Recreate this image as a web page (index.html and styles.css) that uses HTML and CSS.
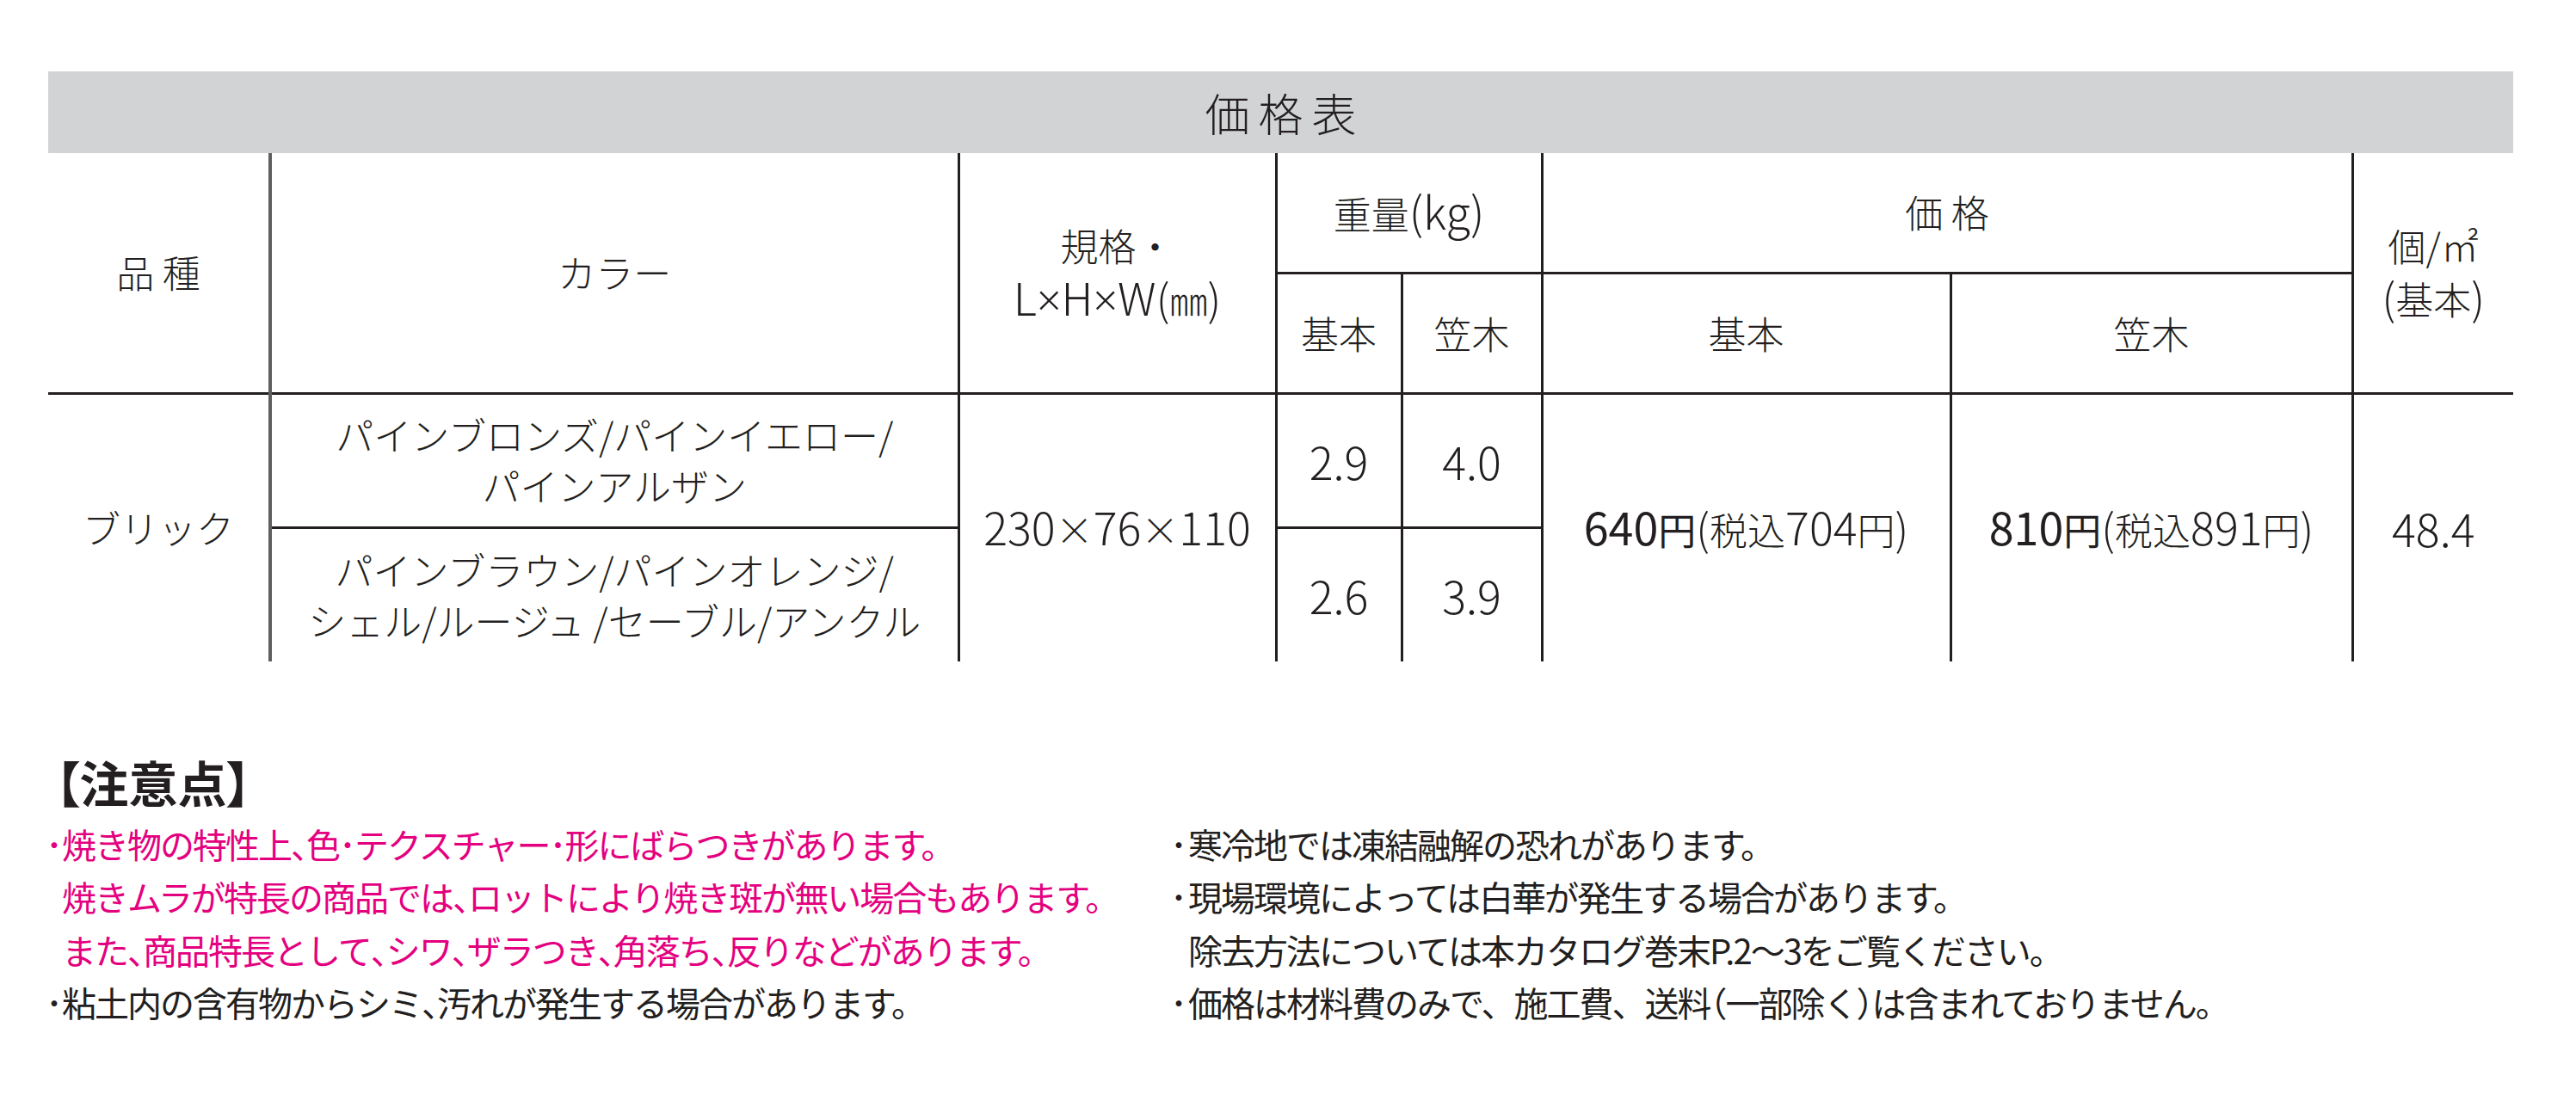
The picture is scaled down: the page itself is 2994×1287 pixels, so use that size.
FILE: index.html
```html
<!DOCTYPE html>
<html lang="ja">
<head>
<meta charset="utf-8">
<title>価格表</title>
<link rel="stylesheet" href="styles.css">
</head>
<body>
<main class="page">
  <table class="price">
    <colgroup>
      <col class="c1"><col class="c2"><col class="c3"><col class="c4"><col class="c5"><col class="c6"><col class="c7"><col class="c8">
    </colgroup>
    <thead>
      <tr class="r-title"><th colspan="8" class="title">価格表</th></tr>
      <tr class="r-h1">
        <th rowspan="2" class="first">品 種</th>
        <th rowspan="2" class="gl">カラー</th>
        <th rowspan="2">規格・<br><span class="num">L<span class="xn">×</span>H<span class="xn">×</span>W</span><span class="par">(</span>㎜<span class="par">)</span></th>
        <th colspan="2" class="hb">重量<span class="num">(kg)</span></th>
        <th colspan="2" class="hb">価 格</th>
        <th rowspan="2">個/㎡<br><span class="par">(</span>基本<span class="par">)</span></th>
      </tr>
      <tr class="r-h2">
        <th>基本</th><th>笠木</th><th>基本</th><th>笠木</th>
      </tr>
    </thead>
    <tbody>
      <tr class="r-b1">
        <td rowspan="2" class="first">ブリック</td>
        <td class="gl rb">パインブロンズ/パインイエロー/<br>パインアルザン</td>
        <td rowspan="2"><span class="num">230<span class="xw">×</span>76<span class="xw">×</span>110</span></td>
        <td class="rb num">2.9</td>
        <td class="rb num">4.0</td>
        <td rowspan="2"><span class="num strong">640</span><span class="strong">円</span><span class="par">(</span>税込<span class="num">704</span>円<span class="par">)</span></td>
        <td rowspan="2"><span class="num strong">810</span><span class="strong">円</span><span class="par">(</span>税込<span class="num">891</span>円<span class="par">)</span></td>
        <td rowspan="2" class="num">48.4</td>
      </tr>
      <tr class="r-b2">
        <td class="gl">パインブラウン/パインオレンジ/<br>シェル/ルージュ /セーブル/アンクル</td>
        <td class="num">2.6</td>
        <td class="num">3.9</td>
      </tr>
    </tbody>
  </table>

  <section class="notes">
    <h2 class="notes-title">【注意点】</h2>
    <div class="notes-cols">
      <ul class="col col-left">
        <li class="pink"><span class="dot">･</span><span class="txt">焼き物の特性上<span class="tk">、</span>色･テクスチャー･形にばらつきがあります。<br>焼きムラが特長の商品では<span class="tk">、</span>ロットにより焼き斑が無い場合もあります。<br>また<span class="tk">、</span>商品特長として<span class="tk">、</span>シワ<span class="tk">、</span>ザラつき<span class="tk">、</span>角落ち<span class="tk">、</span>反りなどがあります。</span></li>
        <li><span class="dot">･</span><span class="txt">粘土内の含有物からシミ<span class="tk">、</span>汚れが発生する場合があります。</span></li>
      </ul>
      <ul class="col col-right">
        <li><span class="dot">･</span><span class="txt">寒冷地では凍結融解の恐れがあります。</span></li>
        <li><span class="dot">･</span><span class="txt">現場環境によっては白華が発生する場合があります。<br>除去方法については本カタログ巻末P.2〜3をご覧ください。</span></li>
        <li><span class="dot">･</span><span class="txt">価格は材料費のみで、施工費、送料<span class="hp">（</span>一部除く<span class="hp">）</span>は含まれておりません。</span></li>
      </ul>
    </div>
  </section>
</main>
</body>
</html>
```

FILE: styles.css
```css
html, body {
  margin: 0;
  padding: 0;
  background: #ffffff;
}

body {
  font-family: "Noto Sans CJK JP", "Noto Sans", sans-serif;
  color: #231f20;
}

.page {
  padding: 83px 73px 0 56px;
}

/* ---------- price table ---------- */
.price {
  border-collapse: collapse;
  table-layout: fixed;
  width: 2865px;
  font-size: 44px;
  line-height: 59px;
  font-weight: 300;
}

.c1 { width: 258px; }
.c2 { width: 800px; }
.c3 { width: 369px; }
.c4 { width: 146px; }
.c5 { width: 163px; }
.c6 { width: 475px; }
.c7 { width: 467px; }
.c8 { width: 187px; }

.price th,
.price td {
  padding: 0;
  text-align: center;
  vertical-align: middle;
  font-weight: 300;
  border-left: 3px solid #231f20;
  white-space: nowrap;
}

.price .first {
  border-left: none;
}

.price .gl {
  border-left: 4px solid #5f5f5f;
}

.price .title {
  border: none;
  background: #d1d3d4;
  font-size: 52px;
  letter-spacing: 10px;
  padding-left: 10px;
}

.r-title { height: 95px; }
.r-h1 { height: 139px; }
.r-h2 { height: 140px; }
.r-b1 { height: 156px; }
.r-b2 { height: 156px; }

.price .hb {
  border-bottom: 3px solid #231f20;
}

.price .r-b1 td {
  border-top: 3px solid #231f20;
}

.price .rb {
  border-bottom: 3px solid #231f20;
}

.num {
  font-size: 52px;
}

.xn {
  font-family: "Noto Sans", sans-serif;
  font-size: 50px;
}

.xw {
  font-size: 44px;
}

.par {
  font-size: 50px;
}

.strong {
  font-weight: 400;
}

/* ---------- notes ---------- */
.notes {
  margin-top: 111px;
}

.notes-title {
  margin: 0 0 14px 8px;
  font-size: 57px;
  line-height: 57px;
  font-weight: 700;
  font-feature-settings: "palt";
}

.notes-cols {
  display: grid;
  grid-template-columns: 1307px 1fr;
  margin-left: -3px;
  font-size: 40px;
  letter-spacing: -2px;
  line-height: 61.3px;
}

.col {
  list-style: none;
  margin: 0;
  padding: 0;
}

.col li {
  display: flex;
}

.dot {
  flex: 0 0 19px;
}

.col-right .dot {
  flex-basis: 21px;
}

.tk,
.hp {
  font-feature-settings: "halt";
}

.pink {
  color: #e4007f;
}
```
